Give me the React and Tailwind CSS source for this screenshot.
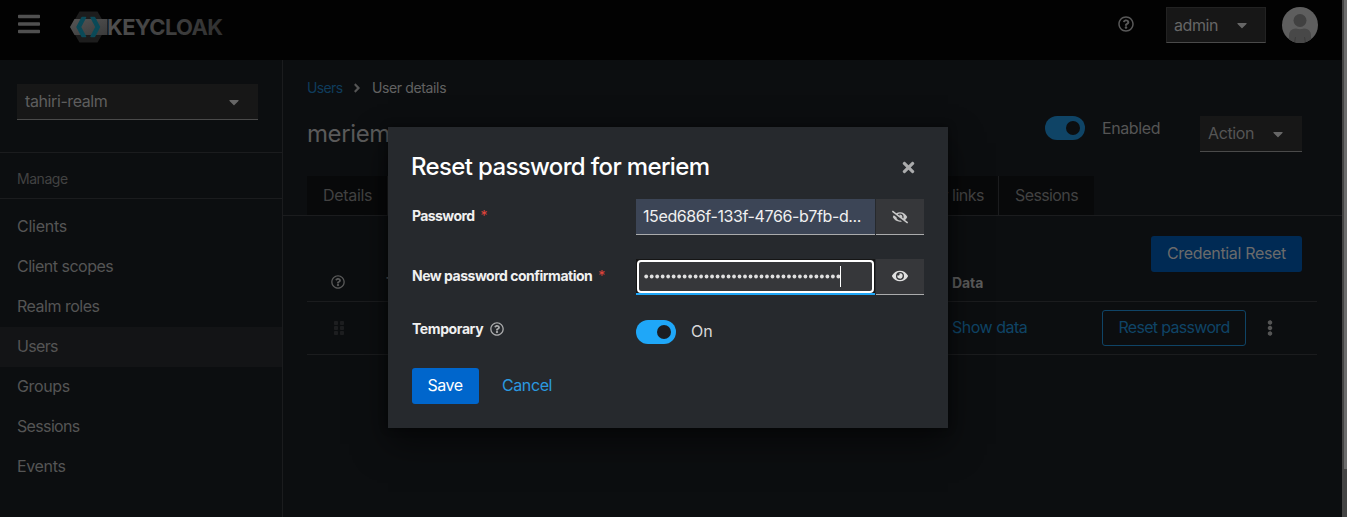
import React from "react";
import {
  FaBars,
  FaCaretDown,
  FaAngleRight,
  FaTimes,
  FaEye,
  FaEyeSlash,
  FaEllipsisV,
  FaGripVertical,
  FaRegQuestionCircle,
} from "react-icons/fa";

function Logo() {
  return (
    <svg className="ml-[30px] mt-[11px] h-8 w-[156px]" viewBox="0 0 156 32">
      <defs>
        <linearGradient id="bar" x1="0" x2="1" y1="0" y2="1">
          <stop offset="0" stopColor="#555" />
          <stop offset="1" stopColor="#3b3b3b" />
        </linearGradient>
        <linearGradient id="word" x1="0" x2="1">
          <stop offset="0" stopColor="#505050" />
          <stop offset="1" stopColor="#303030" />
        </linearGradient>
      </defs>
      <path d="M9.5 0.5H27.5L36.5 16L27.5 31.5H9.5L0.5 16Z" fill="#1d1d1d" />
      <path d="M4.5 8H37.5V24H4.5L0 16Z" fill="url(#bar)" />
      <path d="M12 6.5H15.5L10.5 16L15.5 25.5H12L7 16Z" fill="#0b4a58" stroke="#0b4a58" strokeWidth="1.5" strokeLinejoin="round" />
      <path d="M21 6.5H24.5L29.5 16L24.5 25.5H21L26 16Z" fill="#0b4a58" stroke="#0b4a58" strokeWidth="1.5" strokeLinejoin="round" />
      <text
        x="37"
        y="23.8"
        textLength="116"
        lengthAdjust="spacing"
        fill="url(#word)"
        fontFamily="Inter, sans-serif"
        fontWeight="700"
        fontSize="22"
      >
        KEYCLOAK
      </text>
    </svg>
  );
}

function Masthead() {
  return (
    <header className="flex h-[60px] shrink-0 items-start bg-[#020202]">
      <FaBars className="ml-[18px] mt-[12px] h-6 w-[22px] text-[#505050]" preserveAspectRatio="none" />
      <Logo />
      <FaRegQuestionCircle className="ml-auto mt-4 size-4 text-[#595959]" />
      <div className="ml-8 mt-[7px] flex h-9 w-[100px] items-center border border-[#222] border-b-[#4a4a4a] bg-[#171717] pl-[7px] text-[#666]">
        <span className="w-[54px] pb-px text-[16px] tracking-[-0.4px]">admin</span>
        <FaCaretDown className="ml-[6px] size-4" />
      </div>
      <svg className="ml-4 mr-6 mt-[7px] size-9" viewBox="0 0 36 36">
        <clipPath id="round">
          <circle cx="18" cy="18" r="18" />
        </clipPath>
        <g clipPath="url(#round)">
          <rect width="36" height="36" fill="#5e5e5e" />
          <circle cx="18" cy="13.5" r="6.5" fill="#414141" />
          <path d="M7 36V29Q7 21.5 14 21.5Q18 23 22 21.5Q29 21.5 29 29V36Z" fill="#484848" />
          <path d="M12.5 36L13.5 30M23.5 36L22.5 30" stroke="#3b3b3b" />
        </g>
      </svg>
    </header>
  );
}

const navItems = [
  ["Clients", "tracking-[-0.25px]"],
  ["Client scopes", "tracking-[-0.5px]"],
  ["Realm roles", "tracking-[-0.5px]"],
  ["Users", "tracking-[-0.65px]"],
  ["Groups", "tracking-[-0.35px]"],
  ["Sessions", "tracking-[-0.65px]"],
  ["Events", "tracking-[-0.35px]"],
];

function Sidebar() {
  return (
    <nav className="w-[283px] shrink-0 border-r border-[#1b1c1e] pt-6 text-[#555]">
      <div className="ml-[17px] flex h-9 w-[241px] items-center justify-between border-b border-[#4a4a4a] bg-[#171717] pl-2 pr-4">
        <span className="pb-[2px] tracking-[-0.4px] text-[#5e5e5e]">tahiri-realm</span>
        <FaCaretDown className="size-4 text-[#666]" />
      </div>
      <div className="mt-8 flex h-[47px] items-center border-y border-[#1b1c1e] pl-[17px] pt-[7px] text-[14px] tracking-[-0.45px] text-[#424242]">
        Manage
      </div>
      <ul className="pt-2">
        {navItems.map(([name, tracking]) => (
          <li key={name} className={`flex h-10 items-center pb-[2px] pl-[17px] ${tracking} ${name === "Users" ? "bg-[#131416]" : ""}`}>
            {name}
          </li>
        ))}
      </ul>
    </nav>
  );
}

function Switch({ className, knob }) {
  return (
    <span className={`flex h-6 w-10 shrink-0 items-center justify-end rounded-full pr-[5px] ${className}`}>
      <span className={`size-[14px] rounded-full ${knob}`} />
    </span>
  );
}

function UserDetails() {
  return (
    <main className="min-w-0 flex-1 text-[#555]">
      <div className="flex h-[56px] items-center pl-6 text-[14px]">
        <span className="w-9 tracking-[-0.65px] text-[#0f3c5c]">Users</span>
        <FaAngleRight className="ml-[7px] mr-[8px] size-[14px] text-[#555]" />
        <span className="tracking-[-0.37px] text-[#626262]">User details</span>
      </div>
      <div className="flex h-[60px] items-start pl-6 pr-10">
        <h1 className="text-[24px] leading-[36px] tracking-[-0.4px] text-[#5a5a5a]">meriem</h1>
        <Switch className="ml-auto bg-[#0f4466]" knob="bg-[#0c0e10]" />
        <span className="ml-[17px] w-[98px] tracking-[-0.4px]">Enabled</span>
        <div className="flex h-9 w-[102px] items-center justify-between border-b border-[#4a4a4a] bg-[#171717] pl-2 pr-4">
          <span className="pb-[2px] tracking-[-0.4px]">Action</span>
          <FaCaretDown className="size-4 text-[#666]" />
        </div>
      </div>
      <div className="flex h-10 border-b border-[#1b1c1e] pl-6 text-[#424242]">
        <div className="flex w-[81px] items-center border-r border-[#1b1c1e] bg-[#08090a] pb-px pl-4 tracking-[-0.3px]">Details</div>
        <div className="flex w-[611px] items-center justify-end border-r border-[#1b1c1e] bg-[#08090a] pb-px pr-[14px] tracking-[-0.5px]">
          Identity provider links
        </div>
        <div className="flex w-[95px] items-center bg-[#08090a] pb-px pl-4 tracking-[-0.6px]">Sessions</div>
      </div>
      <div className="pl-6 pr-[25px]">
        <div className="flex h-[86px] border-b border-[#1b1c1e] text-[14px] font-bold">
          <FaRegQuestionCircle className="ml-6 mt-[59px] size-[14px] text-[#595959]" />
          <span className="ml-[41px] mt-[55px]">Type</span>
          <span className="ml-auto mr-[49px] mt-[55px] w-[150px] tracking-[-0.1px] text-[#5a5a5a]">Data</span>
          <button className="mr-[15px] mt-5 h-9 w-[151px] rounded-[3px] bg-[#002a54] pb-[2px] text-[16px] font-normal tracking-[-0.33px] text-[#6b6b6b]">
            Credential Reset
          </button>
        </div>
        <div className="flex h-[53px] items-center border-b border-[#1b1c1e] text-[#0f4466]">
          <FaGripVertical className="ml-6 size-4 text-[#1d1e20]" />
          <span className="ml-auto w-[150px] pb-[2px] tracking-[-0.5px]">Show data</span>
          <span className="flex h-9 w-36 items-center justify-center rounded-[3px] border border-[#0f4466] pb-[2px] tracking-[-0.68px]">
            Reset password
          </span>
          <FaEllipsisV className="ml-4 mr-[39px] size-4 text-[#555]" />
        </div>
      </div>
    </main>
  );
}

function Required() {
  return <span className="ml-[6px] text-[14px] font-normal text-[#e2443b]">*</span>;
}

function ResetDialog() {
  return (
    <section className="h-[301px] w-[560px] bg-[#26292d] px-6 text-[#f0f0f0] shadow-[0_16px_32px_rgba(0,0,0,0.5),0_0_8px_rgba(0,0,0,0.45)]">
      <div className="flex h-[72px] items-center justify-between pr-[7px] pt-[6px]">
        <h2 className="-ml-px pt-px text-[24px] font-medium tracking-[-0.65px] text-white">Reset password for meriem</h2>
        <FaTimes className="mt-[3px] size-[17px] text-[#aaabac]" />
      </div>
      <div className="flex h-[60px]">
        <label className="w-56 pt-[5px] text-[14px] font-bold tracking-[-0.6px]">
          Password<Required />
        </label>
        <div className="h-9 w-[239px] border-b border-[#aaabac] bg-[#3c4556] pl-[7px] pt-[5px] text-[16px] tracking-[-0.39px] whitespace-nowrap">
          15ed686f-133f-4766-b7fb-d...
        </div>
        <div className="ml-px flex h-9 w-12 items-center justify-center border-b border-[#aaabac] bg-[#36373a]">
          <FaEyeSlash className="size-4 text-[#c8c8c8]" />
        </div>
      </div>
      <div className="flex h-[60px]">
        <label className="w-56 pt-[5px] text-[14px] font-bold tracking-[-0.49px]">
          New password confirmation<Required />
        </label>
        <div className="h-9 w-[239px] border-b-2 border-[#1fa7f8] bg-[#151515]">
          <div className="ml-px mt-[1px] flex h-[33px] w-[237px] items-center rounded-[4px] border-2 border-white bg-[#36373a] pl-[5px]">
            <svg className="h-4 w-[196px]" viewBox="0 0 196 16">
              {Array.from({ length: 36 }, (_, i) => (
                <circle key={i} cx={2.2 + i * 5.49} cy="7.5" r="1.9" fill="#e0e0e0" />
              ))}
            </svg>
            <span className="h-[21px] w-px bg-white" />
          </div>
        </div>
        <div className="ml-px flex h-9 w-12 items-center justify-center border-b border-[#aaabac] bg-[#36373a] pb-px">
          <FaEye className="size-4 text-[#e0e0e0]" />
        </div>
      </div>
      <div className="flex h-[49px]">
        <label className="flex h-5 w-56 items-center text-[14px] font-bold tracking-[-0.4px]">
          Temporary
          <FaRegQuestionCircle className="ml-[7px] size-[14px] text-[#aaabac]" />
        </label>
        <Switch className="mt-[1px] bg-[#1fa7f8]" knob="bg-[#1b1d21]" />
        <span className="ml-[15px] text-[#d8d8d8]">On</span>
      </div>
      <div className="flex items-center">
        <button className="h-9 w-[67px] rounded-[3px] bg-[#0066cc] pb-[2px] pr-px tracking-[-0.5px] text-white">Save</button>
        <span className="ml-[23px] pb-[2px] tracking-[-0.4px] text-[#2b9ae0]">Cancel</span>
      </div>
    </section>
  );
}

export default function App() {
  return (
    <div className="relative flex h-[517px] w-[1347px] overflow-hidden bg-[#0c0e10] font-['Inter',sans-serif] text-[16px] leading-6">
      <div className="flex w-[1342px] shrink-0 flex-col">
        <Masthead />
        <div className="flex min-h-0 flex-1">
          <Sidebar />
          <UserDetails />
        </div>
      </div>
      <div className="w-[5px] bg-[#444] pl-[2px]">
        <div className="h-[469px] bg-[#6b6b6b]" />
      </div>
      <div className="absolute inset-0 pl-[388px] pt-[127px]">
        <ResetDialog />
      </div>
    </div>
  );
}
